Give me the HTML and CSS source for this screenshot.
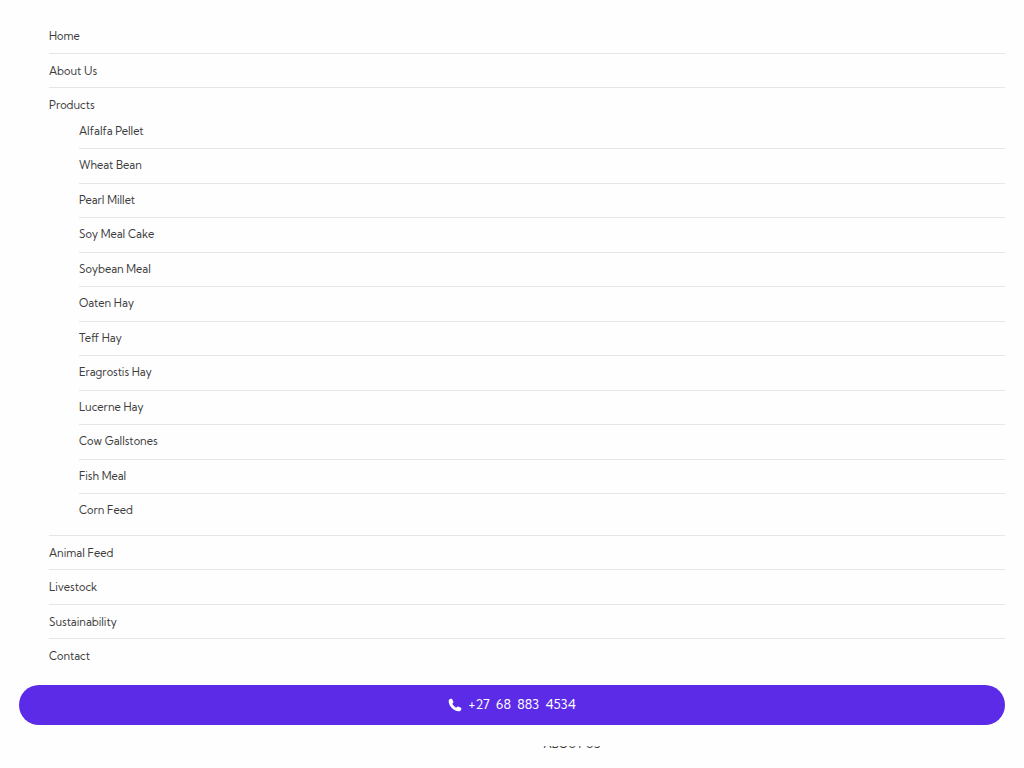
FILE: index.html
```html
<!DOCTYPE html>
<html lang="en">
<head>
<meta charset="utf-8">
<meta name="viewport" content="width=device-width, initial-scale=1">
<title>Menu</title>
<link rel="stylesheet" href="styles.css">
</head>
<body>
<nav class="menu" aria-label="Main">
  <ul class="list">
    <li class="item"><a class="link" href="#home">Home</a></li>
    <li class="item"><a class="link" href="#about">About Us</a></li>
    <li class="item"><a class="link" href="#products">Products</a>
      <ul class="sublist">
        <li class="item"><a class="link" href="#alfalfa">Alfalfa Pellet</a></li>
        <li class="item"><a class="link" href="#wheat">Wheat Bean</a></li>
        <li class="item"><a class="link" href="#millet">Pearl Millet</a></li>
        <li class="item"><a class="link" href="#soycake">Soy Meal Cake</a></li>
        <li class="item"><a class="link" href="#soybean">Soybean Meal</a></li>
        <li class="item"><a class="link" href="#oaten">Oaten Hay</a></li>
        <li class="item"><a class="link" href="#teff">Teff Hay</a></li>
        <li class="item"><a class="link" href="#eragrostis">Eragrostis Hay</a></li>
        <li class="item"><a class="link" href="#lucerne">Lucerne Hay</a></li>
        <li class="item"><a class="link" href="#gallstones">Cow Gallstones</a></li>
        <li class="item"><a class="link" href="#fish">Fish Meal</a></li>
        <li class="item"><a class="link" href="#corn">Corn Feed</a></li>
      </ul>
    </li>
    <li class="item"><a class="link" href="#animal">Animal Feed</a></li>
    <li class="item"><a class="link" href="#livestock">Livestock</a></li>
    <li class="item"><a class="link" href="#sustainability">Sustainability</a></li>
    <li class="item"><a class="link" href="#contact">Contact</a></li>
  </ul>
  <a class="call" href="tel:+27688834534">
    <svg class="call-icon" viewBox="0 0 14 14" aria-hidden="true"><path d="M.8 2.200C1 1.200 2.800.6 3.600.8c.7.2 1.900 2.700 1.800 3.400-.1.600-1 1.100-1 1.600 0 .8 2.900 3.700 3.800 3.800.5 0 1-1 1.600-1.100.8-.1 3.300 1.100 3.500 1.800.3.900-.7 2.700-1.700 2.900C6.400 14.200-.2 7.600.8 2.200z"/></svg>
    <span>+27&nbsp; 68&nbsp; 883&nbsp; 4534</span>
  </a>
</nav>
<section class="about"><h2 class="about-title">ABOUT US</h2></section>
</body>
</html>
```
FILE: styles.css
```css
* { box-sizing: border-box; }
body {
  margin: 0;
  background: #fefefe;
  color: #3c3c3c;
  font-family: "Kumbh Sans", Lato, sans-serif;
  font-size: 11px;
  line-height: 1.5;
}
.menu { padding: 19px 19px 21px; }
.list, .sublist { margin: 0; padding: 0; list-style: none; }
.list { padding-left: 30px; }
.sublist { padding: 1px 0 7px 30px; }
.item { border-bottom: 1px solid #e6e6e8; }
.item:last-child { border-bottom: 0; }
.link {
  display: block;
  padding: 9px 0 8px;
  color: inherit;
  text-decoration: none;
}
.list > .item > .link:not(:last-child) { padding-bottom: 0; }
.sublist .link { padding: 8px 0 9px; }
.call {
  display: flex;
  align-items: center;
  justify-content: center;
  gap: 6px;
  height: 40px;
  margin-top: 12px;
  border-radius: 20px;
  background: #5b2be8;
  color: #fff;
  font-size: 13px;
  text-decoration: none;
}
.call-icon { width: 14px; height: 14px; fill: currentColor; }
.about {
  display: flex;
  align-items: flex-end;
  justify-content: center;
  height: 3px;
  padding-left: 120px;
  overflow: hidden;
}
.about-title { margin: 0; font-size: 11px; line-height: 9px; font-weight: 400; }
```
